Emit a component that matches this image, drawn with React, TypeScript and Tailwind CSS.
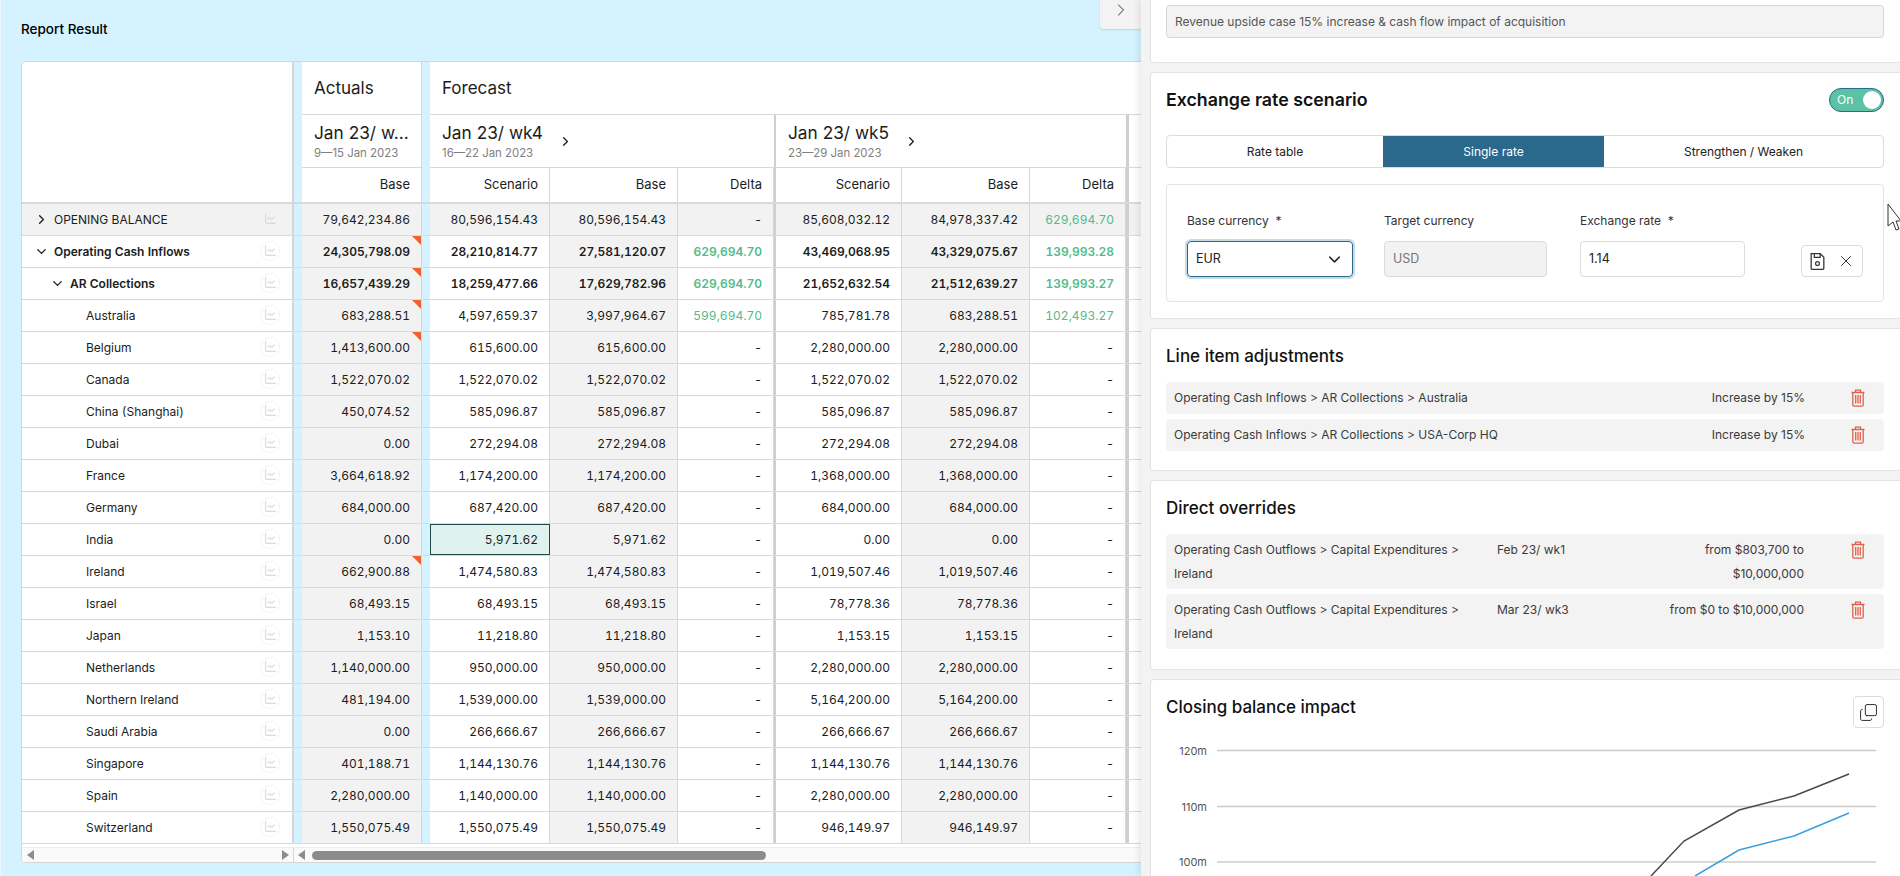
import { ChevronDown, ChevronRight, ChartLine, Copy, X } from "lucide-react";

type Row = {
  label: string;
  depth: number;
  open?: boolean;
  bold?: boolean;
  grey?: boolean;
  flag?: boolean;
  actual: string;
  wk4: string[];
  wk5: string[];
};

const same = (v: string) => [v, v, "-"];

const rows: Row[] = [
  { label: "OPENING BALANCE", depth: 0, open: false, grey: true, actual: "79,642,234.86", wk4: ["80,596,154.43", "80,596,154.43", "-"], wk5: ["85,608,032.12", "84,978,337.42", "629,694.70"] },
  { label: "Operating Cash Inflows", depth: 0, open: true, bold: true, flag: true, actual: "24,305,798.09", wk4: ["28,210,814.77", "27,581,120.07", "629,694.70"], wk5: ["43,469,068.95", "43,329,075.67", "139,993.28"] },
  { label: "AR Collections", depth: 1, open: true, bold: true, flag: true, actual: "16,657,439.29", wk4: ["18,259,477.66", "17,629,782.96", "629,694.70"], wk5: ["21,652,632.54", "21,512,639.27", "139,993.27"] },
  { label: "Australia", depth: 2, flag: true, actual: "683,288.51", wk4: ["4,597,659.37", "3,997,964.67", "599,694.70"], wk5: ["785,781.78", "683,288.51", "102,493.27"] },
  { label: "Belgium", depth: 2, flag: true, actual: "1,413,600.00", wk4: same("615,600.00"), wk5: same("2,280,000.00") },
  { label: "Canada", depth: 2, actual: "1,522,070.02", wk4: same("1,522,070.02"), wk5: same("1,522,070.02") },
  { label: "China (Shanghai)", depth: 2, actual: "450,074.52", wk4: same("585,096.87"), wk5: same("585,096.87") },
  { label: "Dubai", depth: 2, actual: "0.00", wk4: same("272,294.08"), wk5: same("272,294.08") },
  { label: "France", depth: 2, actual: "3,664,618.92", wk4: same("1,174,200.00"), wk5: same("1,368,000.00") },
  { label: "Germany", depth: 2, actual: "684,000.00", wk4: same("687,420.00"), wk5: same("684,000.00") },
  { label: "India", depth: 2, actual: "0.00", wk4: same("5,971.62"), wk5: same("0.00") },
  { label: "Ireland", depth: 2, flag: true, actual: "662,900.88", wk4: same("1,474,580.83"), wk5: same("1,019,507.46") },
  { label: "Israel", depth: 2, actual: "68,493.15", wk4: same("68,493.15"), wk5: same("78,778.36") },
  { label: "Japan", depth: 2, actual: "1,153.10", wk4: same("11,218.80"), wk5: same("1,153.15") },
  { label: "Netherlands", depth: 2, actual: "1,140,000.00", wk4: same("950,000.00"), wk5: same("2,280,000.00") },
  { label: "Northern Ireland", depth: 2, actual: "481,194.00", wk4: same("1,539,000.00"), wk5: same("5,164,200.00") },
  { label: "Saudi Arabia", depth: 2, actual: "0.00", wk4: same("266,666.67"), wk5: same("266,666.67") },
  { label: "Singapore", depth: 2, actual: "401,188.71", wk4: same("1,144,130.76"), wk5: same("1,144,130.76") },
  { label: "Spain", depth: 2, actual: "2,280,000.00", wk4: same("1,140,000.00"), wk5: same("2,280,000.00") },
  { label: "Switzerland", depth: 2, actual: "1,550,075.49", wk4: same("1,550,075.49"), wk5: same("946,149.97") },
];

function TrashIcon() {
  return (
    <svg width="16" height="18" viewBox="0 0 16 18" fill="none" stroke="#e0604a" strokeWidth="1.3">
      <path d="M1.5 3.5h13M5.5 3.5V1.2h5v2.3" />
      <path d="M2.8 3.5v12.2c0 .8.6 1.4 1.4 1.4h7.6c.8 0 1.4-.6 1.4-1.4V3.5" />
      <path d="M5.7 6v8.5M8 6v8.5M10.3 6v8.5" />
    </svg>
  );
}

function SaveIcon() {
  return (
    <svg width="17" height="19" viewBox="0 0 16 18" fill="none" stroke="#333" strokeWidth="1.2">
      <path d="M2 1.5h8.5l3.5 3.5v10.3a1.2 1.2 0 0 1-1.2 1.2H3.2A1.2 1.2 0 0 1 2 15.3z" />
      <path d="M5 1.5v3.7h5.5V1.5" />
      <circle cx="8" cy="11" r="1.8" />
    </svg>
  );
}

function ArrowLeft() {
  return (
    <svg width="7" height="10" viewBox="0 0 7 10" fill="#8c8c8c">
      <path d="M7 0v10L0 5z" />
    </svg>
  );
}

function ArrowRight() {
  return (
    <svg width="7" height="10" viewBox="0 0 7 10" fill="#8c8c8c">
      <path d="M0 0v10l7-5z" />
    </svg>
  );
}

function ValueCell({ value, width, tone, bold, grey, flag, selected }: { value: string; width: string; tone?: boolean; bold?: boolean; grey?: boolean; flag?: boolean; selected?: boolean }) {
  const isGreen = value !== "-" && tone;
  return (
    <div
      className={`relative flex items-center justify-end pr-[11px] border-r border-[#d6d6d6] ${width} ${selected ? "bg-[#dff2ee] outline outline-1 -outline-offset-1 outline-[#1f4a4a]" : grey ? "bg-[#f2f2f2]" : "bg-white"} ${isGreen ? "text-[#55b98d]" : "text-[#1c1c1c]"} ${bold ? "font-semibold" : ""}`}
    >
      {value}
      {flag && <span className="absolute top-0 right-0 w-0 h-0 border-t-[9px] border-l-[9px] border-t-[#f2622a] border-l-transparent" />}
    </div>
  );
}

function TableRow({ row }: { row: Row }) {
  const g = row.grey;
  return (
    <div className="flex h-[32px] border-b border-[#d9d9d9] text-[12px] tabular-nums">
      <div className={`flex items-center shrink-0 w-[272px] border-r-2 border-[#d6d6d6] ${g ? "bg-[#f2f2f2]" : "bg-white"}`}>
        <div className={`flex items-center ${row.depth === 0 ? "pl-[12px]" : row.depth === 1 ? "pl-[28px]" : "pl-[64px]"} flex-1 ${row.bold ? "font-semibold" : ""} text-[#1c1c1c]`}>
          {row.open === true && <ChevronDown size={15} strokeWidth={2.2} className="mr-[5px] text-[#222]" />}
          {row.open === false && <ChevronRight size={15} strokeWidth={2.2} className="mr-[5px] text-[#222]" />}
          {row.label}
        </div>
        <div className="flex items-center justify-center w-[20px] h-[20px] mr-[12px] mb-[2px] rounded-full border border-[#f4f4f4]">
          <ChartLine size={13} className="text-[#d9d9d9]" />
        </div>
      </div>
      <div className="w-[8px] shrink-0 bg-[#d4f2ff]" />
      <ValueCell value={row.actual} width="w-[120px] shrink-0" grey bold={row.bold} flag={row.flag} />
      <div className="w-[8px] shrink-0 bg-[#d4f2ff]" />
      <ValueCell value={row.wk4[0]} width="w-[120px] shrink-0" bold={row.bold} grey={g} selected={row.label === "India"} />
      <ValueCell value={row.wk4[1]} width="w-[128px] shrink-0" bold={row.bold} grey />
      <ValueCell value={row.wk4[2]} width="w-[96px] shrink-0" tone bold={row.bold} grey={g} />
      <div className="w-[2px] shrink-0 bg-[#cfcfcf]" />
      <ValueCell value={row.wk5[0]} width="w-[126px] shrink-0" bold={row.bold} grey={g} />
      <ValueCell value={row.wk5[1]} width="w-[128px] shrink-0" bold={row.bold} grey />
      <ValueCell value={row.wk5[2]} width="w-[96px] shrink-0" tone bold={row.bold} grey={g} />
      <div className="w-[3px] shrink-0 bg-[#cfcfcf]" />
      <div className={`w-[120px] shrink-0 ${g ? "bg-[#f2f2f2]" : "bg-white"}`} />
    </div>
  );
}

function WeekHead({ title, dates, width }: { title: string; dates: string; width: string }) {
  return (
    <div className={`flex items-center shrink-0 pl-[12px] ${width}`}>
      <div>
        <div className="text-[17.3px] leading-[24px] text-[#1c1c1c]">{title}</div>
        <div className="text-[11.4px] leading-[16px] text-[#808080]">{dates}</div>
      </div>
      <ChevronRight size={15} strokeWidth={2.2} className="ml-[15px] text-[#222]" />
    </div>
  );
}

function ColHead({ label, width }: { label: string; width: string }) {
  return <div className={`flex items-center justify-end pr-[11px] shrink-0 border-r border-[#d6d6d6] ${width}`}>{label}</div>;
}

function ReportTable() {
  return (
    <div className="flex flex-col w-[1300px] h-[802px] rounded-[4px] border border-[#d6d6d6] bg-white overflow-hidden">
      <div className="flex h-[142px] shrink-0 border-b-2 border-[#d9d9d9]">
        <div className="w-[272px] shrink-0 border-r-2 border-[#d6d6d6]" />
        <div className="w-[8px] shrink-0 bg-[#d4f2ff]" />
        <div className="flex flex-col w-[120px] shrink-0 border-r border-[#d6d6d6]">
          <div className="flex items-center h-[53px] pl-[12px] pt-[2px] text-[17px] text-[#1c1c1c] border-b border-[#d9d9d9]">Actuals</div>
          <div className="flex flex-col justify-center h-[53px] pl-[12px] border-b border-[#d9d9d9]">
            <div className="text-[17.3px] leading-[24px] text-[#1c1c1c]">Jan 23/ w...</div>
            <div className="text-[11.4px] leading-[16px] text-[#808080]">9—15 Jan 2023</div>
          </div>
          <div className="flex flex-1 items-center justify-end pr-[11px] text-[13px] text-[#1c1c1c]">Base</div>
        </div>
        <div className="w-[8px] shrink-0 bg-[#d4f2ff]" />
        <div className="flex flex-col flex-1">
          <div className="flex items-center h-[53px] pl-[12px] pt-[2px] text-[17px] text-[#1c1c1c] border-b border-[#d9d9d9]">Forecast</div>
          <div className="flex h-[53px] border-b border-[#d9d9d9]">
            <WeekHead title="Jan 23/ wk4" dates="16—22 Jan 2023" width="w-[344px]" />
            <div className="w-[2px] shrink-0 bg-[#cfcfcf]" />
            <WeekHead title="Jan 23/ wk5" dates="23—29 Jan 2023" width="w-[350px]" />
            <div className="w-[3px] shrink-0 bg-[#cfcfcf]" />
          </div>
          <div className="flex flex-1 text-[13px] text-[#1c1c1c]">
            <ColHead label="Scenario" width="w-[120px]" />
            <ColHead label="Base" width="w-[128px]" />
            <ColHead label="Delta" width="w-[96px]" />
            <div className="w-[2px] shrink-0 bg-[#cfcfcf]" />
            <ColHead label="Scenario" width="w-[126px]" />
            <ColHead label="Base" width="w-[128px]" />
            <ColHead label="Delta" width="w-[96px]" />
            <div className="w-[3px] shrink-0 bg-[#cfcfcf]" />
          </div>
        </div>
      </div>
      <div className="flex-1 overflow-hidden">
        {rows.map((r) => (
          <TableRow key={r.label} row={r} />
        ))}
      </div>
      <div className="flex items-center h-[15px] shrink-0 bg-[#fafafa] border-t border-[#eeeeee]">
        <div className="flex items-center justify-between w-[272px] shrink-0 pl-[5px] pr-[4px] border-r border-[#d6d6d6] h-full">
          <ArrowLeft />
          <ArrowRight />
        </div>
        <div className="ml-[4px]">
          <ArrowLeft />
        </div>
        <div className="ml-[7px] w-[454px] h-[9px] rounded-full bg-[#8c8c8c]" />
      </div>
    </div>
  );
}

function ItemRow({ path, date, value, tall }: { path: string; date?: string; value: string; tall?: boolean }) {
  if (!tall) {
    return (
      <div className="flex items-center h-[32px] px-[8px] rounded-[4px] bg-[#f3f3f3] text-[12px] text-[#3a3a3a]">
        <div className="flex-1">{path}</div>
        <div>{value}</div>
        <div className="flex justify-end w-[71px] pr-[10px]">
          <TrashIcon />
        </div>
      </div>
    );
  }
  return (
    <div className="grid grid-cols-[323px_150px_157px_1fr] pl-[8px] pr-[8px] pt-[4px] pb-[3px] leading-[24px] rounded-[4px] bg-[#f3f3f3] text-[12px] text-[#3a3a3a]">
      <div className="pr-[20px]">{path}</div>
      <div>{date}</div>
      <div className="text-right">{value}</div>
      <div className="flex justify-end pr-[10px] pt-[3px]">
        <TrashIcon />
      </div>
    </div>
  );
}

function Card({ className, children }: { className?: string; children: React.ReactNode }) {
  return <div className={`shrink-0 bg-white border border-r-0 border-[#e4e4e4] rounded-l-[4px] pl-[15px] pr-[16px] ${className ?? ""}`}>{children}</div>;
}

function ClosingChart() {
  return (
    <svg width="730" height="190" viewBox="0 0 730 190" className="absolute left-[15px] top-[55px]">
      {[
        ["120m", 15.5],
        ["110m", 71.5],
        ["100m", 127],
      ].map(([t, y]) => (
        <g key={t}>
          <line x1="51" x2="710" y1={y} y2={y} stroke="#cccccc" strokeWidth="1.5" />
          <text x="41" y={Number(y) + 4} textAnchor="end" fontSize="11" fill="#555">{t}</text>
        </g>
      ))}
      <polyline points="485,141 518,106 573,75 628,61 683,39" fill="none" stroke="#4a4a4a" strokeWidth="1.5" />
      <polyline points="529,141 573,115 628,101 683,78" fill="none" stroke="#3b9fdc" strokeWidth="1.5" />
    </svg>
  );
}

function SidePanel() {
  return (
    <div className="relative flex flex-col gap-[9px] w-[759px] shrink-0 h-[876px] overflow-hidden pl-[9px] bg-[#f3f3f3] shadow-[-3px_0_6px_rgba(0,0,0,0.08)]">
      <Card className="h-[63px] pt-[5px] rounded-tl-none border-t-0">
        <div className="flex items-center h-[33px] px-[8px] pt-[1px] rounded-[4px] border border-[#d6d6d6] bg-[#f3f3f3] text-[12px] text-[#555]">
          Revenue upside case 15% increase &amp; cash flow impact of acquisition
        </div>
      </Card>

      <Card className="h-[247px] pt-[15px]">
        <div className="flex items-center justify-between h-[24px]">
          <div className="text-[17.8px] font-semibold text-[#111]">Exchange rate scenario</div>
          <div className="flex items-center justify-between w-[55px] h-[24px] pl-[7px] pr-[2px] rounded-full bg-[#5cc2a6] border border-[#2a6a8c] text-[12px] text-white">
            On
            <span className="w-[18px] h-[18px] rounded-full bg-white" />
          </div>
        </div>
        <div className="flex h-[33px] mt-[23px] rounded-[4px] border border-[#dcdcdc] text-[12px] text-[#222] overflow-hidden">
          <div className="flex items-center justify-center w-[216px]">Rate table</div>
          <div className="flex items-center justify-center w-[221px] bg-[#2a688c] text-white">Single rate</div>
          <div className="flex items-center justify-center flex-1">Strengthen / Weaken</div>
        </div>
        <div className="flex h-[118px] mt-[16px] pl-[20px] pt-[27px] rounded-[4px] border border-[#e4e4e4]">
          <div className="w-[166px]">
            <div className="h-[18px] text-[12px] text-[#333]">Base currency&nbsp; *</div>
            <div className="flex items-center justify-between h-[36px] mt-[11px] px-[8px] rounded-[4px] border border-[#2a688c] shadow-[0_0_0_2px_#c7dbe6] text-[12.5px] text-[#222]">
              EUR
              <ChevronDown size={19} strokeWidth={1.8} className="text-[#222]" />
            </div>
          </div>
          <div className="w-[163px] ml-[31px]">
            <div className="h-[18px] text-[12px] text-[#333]">Target currency</div>
            <div className="flex items-center h-[36px] mt-[11px] px-[8px] rounded-[4px] border border-[#dcdcdc] bg-[#f2f2f2] text-[12.5px] text-[#777]">USD</div>
          </div>
          <div className="w-[165px] ml-[33px]">
            <div className="h-[18px] text-[12px] text-[#333]">Exchange rate&nbsp; *</div>
            <div className="flex items-center h-[36px] mt-[11px] px-[8px] rounded-[4px] border border-[#dcdcdc] text-[12.5px] text-[#222]">1.14</div>
          </div>
          <div className="flex items-center justify-center gap-[11px] w-[62px] h-[32px] ml-[56px] mt-[33px] rounded-[4px] border border-[#dcdcdc]">
            <SaveIcon />
            <X size={18} strokeWidth={1.3} className="text-[#333]" />
          </div>
        </div>
      </Card>

      <Card className="h-[143px] pt-[16px]">
        <div className="text-[17px] leading-[22px] font-medium text-[#111]">Line item adjustments</div>
        <div className="flex flex-col gap-[5px] mt-[15px]">
          <ItemRow path="Operating Cash Inflows > AR Collections > Australia" value="Increase by 15%" />
          <ItemRow path="Operating Cash Inflows > AR Collections > USA-Corp HQ" value="Increase by 15%" />
        </div>
      </Card>

      <Card className="h-[190px] pt-[16px]">
        <div className="text-[17px] leading-[22px] font-medium text-[#111]">Direct overrides</div>
        <div className="flex flex-col gap-[5px] mt-[15px]">
          <ItemRow tall path="Operating Cash Outflows > Capital Expenditures > Ireland" date="Feb 23/ wk1" value="from $803,700 to $10,000,000" />
          <ItemRow tall path="Operating Cash Outflows > Capital Expenditures > Ireland" date="Mar 23/ wk3" value="from $0 to $10,000,000" />
        </div>
      </Card>

      <Card className="relative h-[300px] pt-[16px]">
        <div className="flex items-start justify-between">
          <div className="text-[17px] leading-[22px] font-medium text-[#111]">Closing balance impact</div>
          <div className="flex items-center justify-center w-[31px] h-[32px] rounded-[4px] border border-[#dcdcdc]">
            <Copy size={19} strokeWidth={1.2} className="text-[#222] -scale-y-100" />
          </div>
        </div>
        <ClosingChart />
      </Card>

      {/* mouse pointer caught in the capture */}
      <svg width="14" height="28" viewBox="0 0 14 28" className="absolute left-[746px] top-[203px]" fill="#fff" stroke="#333" strokeWidth="1">
        <path d="M1 1v22l5-4 3 8 3-1-3-8h5z" />
      </svg>
    </div>
  );
}

export default function App() {
  return (
    <div className="flex h-[876px] overflow-hidden bg-[#d4f2ff] font-['Inter',sans-serif]">
      <div className="relative flex-1 min-w-0 overflow-hidden pl-[20px] border-l border-[#e8f8ff]">
        <div className="h-[61px] pt-[19px] text-[13.5px] leading-[20px] font-medium text-black">Report Result</div>
        <ReportTable />
        <div className="absolute top-0 right-0 flex justify-center w-[41px] h-[29px] bg-[#f3f3f3] rounded-bl-[4px] shadow-[0_1px_2px_rgba(0,0,0,0.12)]">
          <ChevronRight size={20} strokeWidth={1.1} className="text-[#222]" />
        </div>
      </div>
      <SidePanel />
    </div>
  );
}
